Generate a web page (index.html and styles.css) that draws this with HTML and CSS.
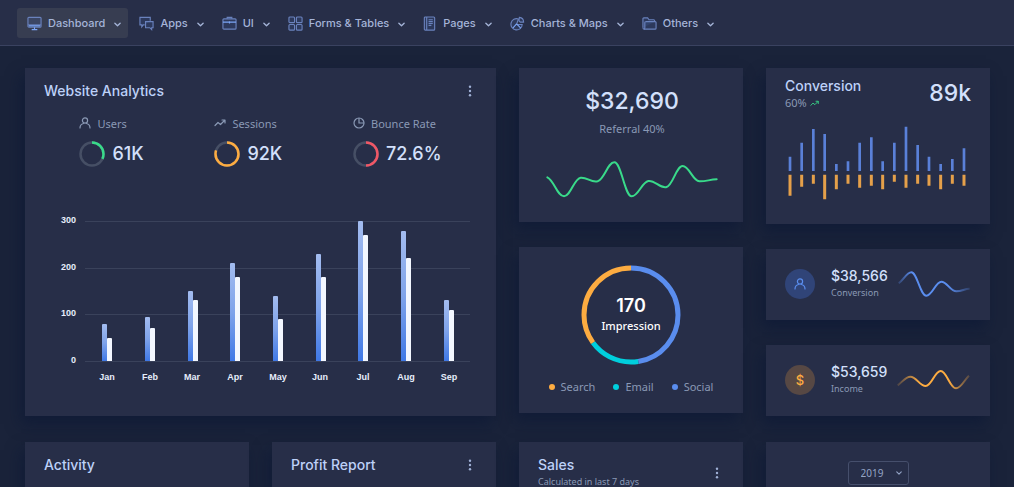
FILE: index.html
```html
<!DOCTYPE html>
<html lang="en">
<head>
<meta charset="utf-8">
<title>Dashboard</title>
<link rel="stylesheet" href="styles.css">
</head>
<body>
<svg class="defs" width="0" height="0" aria-hidden="true">
  <symbol id="chevron" viewBox="0 0 8 8"><path d="M1 2.5L4 5.5L7 2.5" fill="none" stroke="currentColor" stroke-width="1.5" stroke-linecap="round" stroke-linejoin="round"/></symbol>
  <symbol id="user" viewBox="0 0 12 12"><g fill="none" stroke="currentColor" stroke-width="1.2" stroke-linecap="round"><circle cx="6" cy="3.5" r="2.6"/><path d="M1 11C1 8.5 2.500 7 4.500 6.500M11 11C11 8.500 9.500 7 7.500 6.500"/></g></symbol>
  <symbol id="trend" viewBox="0 0 12 12"><path d="M1 8.500L4 5.500L6.500 7.500L10.500 3.500M8 3H11V6" fill="none" stroke="currentColor" stroke-width="1.200" stroke-linecap="round" stroke-linejoin="round"/></symbol>
  <symbol id="dots" viewBox="0 0 4 12"><g fill="currentColor"><circle cx="2" cy="1.700" r="1.200"/><circle cx="2" cy="6" r="1.200"/><circle cx="2" cy="10.300" r="1.200"/></g></symbol>
</svg>
<nav class="nav">
  <button class="nav-item active"><svg class="nav-icon" viewBox="0 0 16 16"><rect x="1" y="1.500" width="14" height="10.500" rx="1"/><path d="M1 9.500H15" /><path d="M2 10.500H14M8 12V14.500M5 14.500H11" class="bright"/></svg>Dashboard<svg class="chev"><use href="#chevron"/></svg></button>
  <button class="nav-item"><svg class="nav-icon" viewBox="0 0 16 16"><path d="M6 9.500H4.500L3 11.500V9.500H1V1.500H12V5"/><path d="M7 6H15V12.500H13.500V14.500L11.500 12.500H7Z"/></svg>Apps<svg class="chev"><use href="#chevron"/></svg></button>
  <button class="nav-item"><svg class="nav-icon" viewBox="0 0 16 16"><rect x="1" y="3" width="14" height="11" rx="1"/><path d="M5.500 3V1.500H10.500V3"/><path d="M1 6.500H15M8 5.500V8" class="bright"/></svg>UI<svg class="chev"><use href="#chevron"/></svg></button>
  <button class="nav-item"><svg class="nav-icon" viewBox="0 0 16 16"><rect x="1" y="1" width="6" height="6" rx="1"/><rect x="9" y="1" width="6" height="6" rx="1"/><rect x="1" y="9" width="6" height="6" rx="1"/><rect x="9" y="9" width="6" height="6" rx="1"/></svg>Forms &amp; Tables<svg class="chev"><use href="#chevron"/></svg></button>
  <button class="nav-item"><svg class="nav-icon narrow" viewBox="0 0 13 16"><rect x="1" y="1" width="11" height="14" rx="1"/><path d="M3.500 1V15M5.500 4H10M5.500 6H10M5.500 8H10M5.500 10H8.500"/></svg>Pages<svg class="chev"><use href="#chevron"/></svg></button>
  <button class="nav-item"><svg class="nav-icon" viewBox="0 0 16 16"><path d="M9 3.200A6 6 0 1 0 13 9L7 9Z"/><path d="M10 1.500A5 5 0 0 1 14.500 6.500L11 6.500L9.500 5Z"/><path d="M7 8.500L3 13M7 8.500L11.500 13" class="bright"/></svg>Charts &amp; Maps<svg class="chev"><use href="#chevron"/></svg></button>
  <button class="nav-item"><svg class="nav-icon" viewBox="0 0 16 16"><path d="M1 12.500V3q0-1 1-1H6L7.500 4H12.500q1 0 1 1V6"/><path d="M4 6H14q1 0 1 1V13q0 1-1 1H2.500q-1.500 0-1.500-1.500"/><path d="M4 6q-1 0-1 1V12.500q0 1.500-1 1.500"/></svg>Others<svg class="chev"><use href="#chevron"/></svg></button>
</nav>
<main class="page">
  <section class="card analytics">
    <header class="card-head"><h2>Website Analytics</h2><button class="more" aria-label="More options"><svg><use href="#dots"/></svg></button></header>
    <div class="stats">
      <div class="stat">
        <div class="stat-label"><svg><use href="#user"/></svg>Users</div>
        <div class="stat-value"><svg class="ring" viewBox="0 0 26 26"><circle cx="13" cy="13" r="11.500"/><circle class="green" cx="13" cy="13" r="11.500" pathLength="100" stroke-dasharray="32 100" transform="rotate(-90 13 13)"/></svg>61K</div>
      </div>
      <div class="stat">
        <div class="stat-label"><svg><use href="#trend"/></svg>Sessions</div>
        <div class="stat-value"><svg class="ring" viewBox="0 0 26 26"><circle cx="13" cy="13" r="11.500"/><circle class="orange" cx="13" cy="13" r="11.500" pathLength="100" stroke-dasharray="80 100" transform="rotate(-90 13 13)"/></svg>92K</div>
      </div>
      <div class="stat">
        <div class="stat-label"><svg viewBox="0 0 12 12"><g fill="none" stroke="currentColor" stroke-width="1.200"><circle cx="6" cy="6" r="5"/><path d="M6 1V6H11"/></g></svg>Bounce Rate</div>
        <div class="stat-value"><svg class="ring" viewBox="0 0 26 26"><circle cx="13" cy="13" r="11.500"/><circle class="red" cx="13" cy="13" r="11.500" pathLength="100" stroke-dasharray="50 100" transform="rotate(-90 13 13)"/></svg>72.6%</div>
      </div>
    </div>
    <svg class="bar-chart" viewBox="0 0 433 180" role="img" aria-label="Monthly analytics">
      <defs><linearGradient id="bar" x1="0" y1="0" x2="0" y2="1"><stop offset="0" stop-color="#a3bcf0"/><stop offset=".5" stop-color="#7fa3ea"/><stop offset="1" stop-color="#3f78e6"/></linearGradient></defs>
      <path class="grid-line" d="M41 16.500H426M41 63.500H426M41 109.500H426M41 156.500H426"/>
      <g class="axis end"><text x="32" y="18">300</text><text x="32" y="65">200</text><text x="32" y="111">100</text><text x="32" y="158">0</text></g>
      <g fill="url(#bar)">
        <path d="M58 156V120q0-1 1-1h3q1 0 1 1V156z"/><path d="M101 156V113q0-1 1-1h3q1 0 1 1V156z"/><path d="M144 156V87q0-1 1-1h3q1 0 1 1V156z"/><path d="M186 156V59q0-1 1-1h3q1 0 1 1V156z"/><path d="M229 156V92q0-1 1-1h3q1 0 1 1V156z"/><path d="M272 156V50q0-1 1-1h3q1 0 1 1V156z"/><path d="M314 156V17q0-1 1-1h3q1 0 1 1V156z"/><path d="M357 156V27q0-1 1-1h3q1 0 1 1V156z"/><path d="M400 156V96q0-1 1-1h3q1 0 1 1V156z"/>
      </g>
      <g fill="#f3f7ff">
        <path d="M63 156V134q0-1 1-1h3q1 0 1 1V156z"/><path d="M106 156V124q0-1 1-1h3q1 0 1 1V156z"/><path d="M149 156V96q0-1 1-1h3q1 0 1 1V156z"/><path d="M191 156V73q0-1 1-1h3q1 0 1 1V156z"/><path d="M234 156V115q0-1 1-1h3q1 0 1 1V156z"/><path d="M277 156V73q0-1 1-1h3q1 0 1 1V156z"/><path d="M319 156V31q0-1 1-1h3q1 0 1 1V156z"/><path d="M362 156V54q0-1 1-1h3q1 0 1 1V156z"/><path d="M405 156V106q0-1 1-1h3q1 0 1 1V156z"/>
      </g>
      <g class="axis"><text x="63" y="175">Jan</text><text x="106" y="175">Feb</text><text x="148" y="175">Mar</text><text x="191" y="175">Apr</text><text x="234" y="175">May</text><text x="276" y="175">Jun</text><text x="319" y="175">Jul</text><text x="362" y="175">Aug</text><text x="405" y="175">Sep</text></g>
    </svg>
  </section>

  <div class="stack">
    <section class="card referral">
      <div class="big">$32,690</div>
      <div class="muted">Referral 40%</div>
      <svg viewBox="0 0 516 112" class="line" role="img" aria-label="Referral trend"><path stroke="#39da8a" stroke-width="6" stroke-linecap="round" d="M4 49C24 58 34 106 54 106C74 106 84 52 104 50C124 48 135 66 155 61C175 55 185 4 205 4C226 4 236 106 257 106C277 106 287 64 307 60C328 57 342 84 362 78C381 72 391 15 410 15C430 15 440 60 460 61C480 62 492 55 512 55"/></svg>
    </section>
    <section class="card impression">
      <div class="donut">
        <svg viewBox="0 0 100 100" aria-hidden="true"><g fill="none" stroke-width="5" transform="rotate(-90 50 50)"><circle cx="50" cy="50" r="47" pathLength="100" stroke="#5a8dee" stroke-dasharray="47.500 100"/><circle cx="50" cy="50" r="47" pathLength="100" stroke="#00cfdd" stroke-dasharray="17.500 100" stroke-dashoffset="-47.500"/><circle cx="50" cy="50" r="47" pathLength="100" stroke="#fdac41" stroke-dasharray="35 100" stroke-dashoffset="-65"/></g></svg>
        <div class="donut-text"><strong>170</strong><span>Impression</span></div>
      </div>
      <ul class="legend"><li class="l-orange">Search</li><li class="l-cyan">Email</li><li class="l-blue">Social</li></ul>
    </section>
  </div>

  <div class="stack">
    <section class="card conversion">
      <header class="conv-head"><div><h2>Conversion</h2><div class="muted rate">60% <svg><use href="#trend"/></svg></div></div><div class="big">89k</div></header>
      <svg viewBox="0 0 558 230" class="line" role="img" aria-label="Conversion bars">
        <path stroke="#5a80d8" stroke-width="8" d="M15 138V95M50 138V53M85 138V12M119 138V27M154 138V117M189 138V109M224 138V53M259 138V37M293 138V109M328 138V53M363 138V5M398 138V60M432 138V95M467 138V117M502 138V102M537 138V70"/>
        <path stroke="#e5a04a" stroke-width="9" d="M15 149V212M50 149V185M85 149V176M119 149V223M154 149V193M189 149V176M224 149V188M259 149V182M293 149V193M328 149V170M363 149V188M398 149V176M432 149V182M467 149V193M502 149V176M537 149V182"/>
      </svg>
    </section>
    <section class="card mini">
      <span class="badge blue"><svg><use href="#user"/></svg></span>
      <div class="mini-text"><strong>$38,566</strong><span>Conversion</span></div>
      <svg class="spark" viewBox="0 0 222 84" aria-hidden="true"><defs><linearGradient id="fb" gradientUnits="userSpaceOnUse" x1="0" x2="222" y1="0" y2="0"><stop offset="0" stop-color="#5a8dee" stop-opacity=".15"/><stop offset=".2" stop-color="#5a8dee"/><stop offset=".7" stop-color="#5a8dee"/><stop offset="1" stop-color="#5a8dee" stop-opacity=".15"/></linearGradient></defs><path stroke="url(#fb)" stroke-width="6" d="M5 40C20 28 30 7 43 7C60 7 70 77 88 77C106 77 116 35 133 35C150 35 160 64 178 64C196 64 202 56 218 56"/></svg>
    </section>
    <section class="card mini">
      <span class="badge amber">$</span>
      <div class="mini-text"><strong>$53,659</strong><span>Income</span></div>
      <svg class="spark" viewBox="0 0 222 84" aria-hidden="true"><defs><linearGradient id="fo" gradientUnits="userSpaceOnUse" x1="0" x2="222" y1="0" y2="0"><stop offset="0" stop-color="#fdac41" stop-opacity=".15"/><stop offset=".3" stop-color="#fdac41"/><stop offset=".7" stop-color="#fdac41"/><stop offset="1" stop-color="#fdac41" stop-opacity=".15"/></linearGradient></defs><path stroke="url(#fo)" stroke-width="6" d="M2 58C18 46 26 32 40 32C58 32 68 60 86 60C104 60 113 15 131 15C149 15 159 67 177 67C192 67 202 42 216 29"/></svg>
    </section>
  </div>

  <section class="card lower"><h2>Activity</h2></section>
  <section class="card lower"><h2>Profit Report</h2><button class="more" aria-label="More options"><svg><use href="#dots"/></svg></button></section>
  <section class="card lower sales"><div><h2>Sales</h2><p>Calculated in last 7 days</p></div><button class="more" aria-label="More options"><svg><use href="#dots"/></svg></button></section>
  <section class="card lower year"><div class="select-wrap"><select aria-label="Year"><option>2019</option></select><svg class="chev"><use href="#chevron"/></svg></div></section>
</main>
</body>
</html>
```

FILE: styles.css
```css
* { box-sizing: border-box; }
body {
  margin: 0;
  min-height: 100vh;
  display: flex;
  flex-direction: column;
  background: #1a233a;
  color: #bdd1f8;
  font-family: "Noto Sans", sans-serif;
  font-size: 11px;
}
h2, p, ul { margin: 0; padding: 0; }
button, select { font: inherit; color: inherit; background: none; border: 0; padding: 0; }
svg { display: block; flex: none; }
.defs { position: absolute; }

.nav {
  display: flex;
  gap: 1px;
  padding: 8px 17px 7px;
  background: #272e48;
  border-bottom: 1px solid #3a4260;
}
.nav-item {
  display: flex;
  align-items: center;
  height: 30px;
  padding: 0 7px 0 10px;
  border-radius: 3px;
  color: #a5b4d8;
  font: 500 11px/16px Inter, sans-serif;
  white-space: nowrap;
}
.nav-item.active { background: #373d51; }
.nav-icon {
  width: 15px;
  height: 15px;
  margin-right: 6px;
  fill: rgba(90, 141, 238, .12);
  stroke: #6a82bd;
  stroke-width: 1.2;
}
.nav-icon.narrow { width: 13px; margin-right: 7px; }
.nav-icon .bright { stroke: #7ba5f5; }
.chev { width: 7px; height: 7px; margin-left: 9px; }
.nav-item .chev { margin-top: 2px; }

.page {
  flex: 1;
  display: grid;
  grid-template-columns: repeat(4, minmax(0, 1fr));
  grid-template-rows: auto 1fr;
  gap: 26px 23px;
  padding: 22px 24px 0 25px;
}
.card {
  background: #272e48;
  box-shadow: -4px 8px 14px rgba(9, 22, 52, .55);
}
h2 { font: 500 14px/20px Inter, sans-serif; }
.muted { color: #8a99b5; }
.big { font: 500 23px/28px Inter, sans-serif; color: #d3e0fb; }
.line { width: 100%; fill: none; }
.more { display: grid; place-items: center; width: 14px; height: 20px; color: #9fb0d5; }
.more svg { width: 4px; height: 12px; }

.analytics { grid-column: span 2; padding: 13px 19px 30px; }
.card-head { display: flex; justify-content: space-between; }
.stats { display: flex; justify-content: space-around; margin-top: 14px; }
.stat-label { display: flex; align-items: center; gap: 6px; height: 16px; color: #8a99b5; }
.stat-label svg { width: 12px; height: 12px; }
.stat-value {
  display: flex;
  align-items: center;
  gap: 7px;
  margin-top: 10px;
  color: #d3e0fb;
  font: 500 18px/26px Inter, sans-serif;
}
.ring { width: 26px; height: 26px; fill: none; stroke: #464f65; stroke-width: 2.5; }
.green { stroke: #39da8a; }
.orange { stroke: #fdac41; }
.red { stroke: #f05766; }
.bar-chart { width: 100%; margin-top: 38px; }
.grid-line { stroke: #3a425b; }
.axis { font: 700 9px "Liberation Sans", sans-serif; fill: #e6edfb; text-anchor: middle; }
.axis.end { text-anchor: end; }

.stack { display: flex; flex-direction: column; gap: 25px; }
.referral { padding: 19px 25px 24px 27px; text-align: center; }
.referral .muted { line-height: 16px; margin-top: 6px; }
.referral .line { margin-top: 24px; }
.impression { padding: 18px 19px 17px; }
.donut { display: grid; width: 100px; margin: 0 auto; }
.donut > * { grid-area: 1 / 1; }
.donut-text { display: flex; flex-direction: column; align-items: center; justify-content: center; color: #fff; }
.donut-text strong { font: 600 18px/22px Inter, sans-serif; }
.donut-text span { font-weight: 500; line-height: 18px; }
.legend { display: flex; justify-content: center; gap: 18px; margin-top: 13px; list-style: none; color: #8a99b5; line-height: 18px; }
.legend li { display: flex; align-items: center; gap: 6px; }
.legend li::before { content: ""; width: 6px; height: 6px; border-radius: 50%; background: currentColor; }
.legend .l-orange::before { background: #fdac41; }
.legend .l-cyan::before { background: #00cfdd; }
.legend .l-blue::before { background: #5a8dee; }

.conversion { padding: 8px 19px 22px; }
.conv-head { display: flex; justify-content: space-between; }
.conv-head .big { margin-top: 3px; }
.rate { display: flex; align-items: center; gap: 3px; line-height: 14px; }
.rate svg { width: 9px; height: 9px; color: #39da8a; }
.conversion .line { margin-top: 15px; }
.mini { display: flex; align-items: center; min-height: 71px; padding: 0 19px; }
.badge { display: grid; place-items: center; width: 30px; height: 30px; border-radius: 50%; }
.badge svg { width: 12px; height: 12px; }
.badge.blue { background: #304478; color: #5a8dee; }
.badge.amber { background: #574844; color: #fdac41; font: 500 13px/16px Inter, sans-serif; }
.mini-text { display: flex; flex-direction: column; margin-left: 16px; }
.mini-text strong { font: 500 14px/18px Inter, sans-serif; color: #d3e0fb; }
.mini-text span { font-size: 9px; line-height: 16px; color: #8a99b5; }
.spark { width: 74px; height: 28px; margin-left: auto; fill: none; }

.lower { display: flex; justify-content: space-between; align-items: flex-start; padding: 13px 19px 0; }
.sales p { font-size: 9px; line-height: 13px; color: #8a99b5; }
.sales .more { margin-top: 8px; }
.year { justify-content: center; padding-top: 19px; }
.select-wrap { display: grid; align-items: center; width: 61px; height: 24px; }
.select-wrap > * { grid-area: 1 / 1; }
.select-wrap select {
  appearance: none;
  width: 100%;
  height: 100%;
  padding: 0 12px;
  border: 1px solid #464f6c;
  border-radius: 3px;
  color: #94a4c6;
  font-size: 10px;
}
.select-wrap .chev { width: 6px; height: 6px; margin-right: 7px; justify-self: end; color: #94a4c6; pointer-events: none; }
```
